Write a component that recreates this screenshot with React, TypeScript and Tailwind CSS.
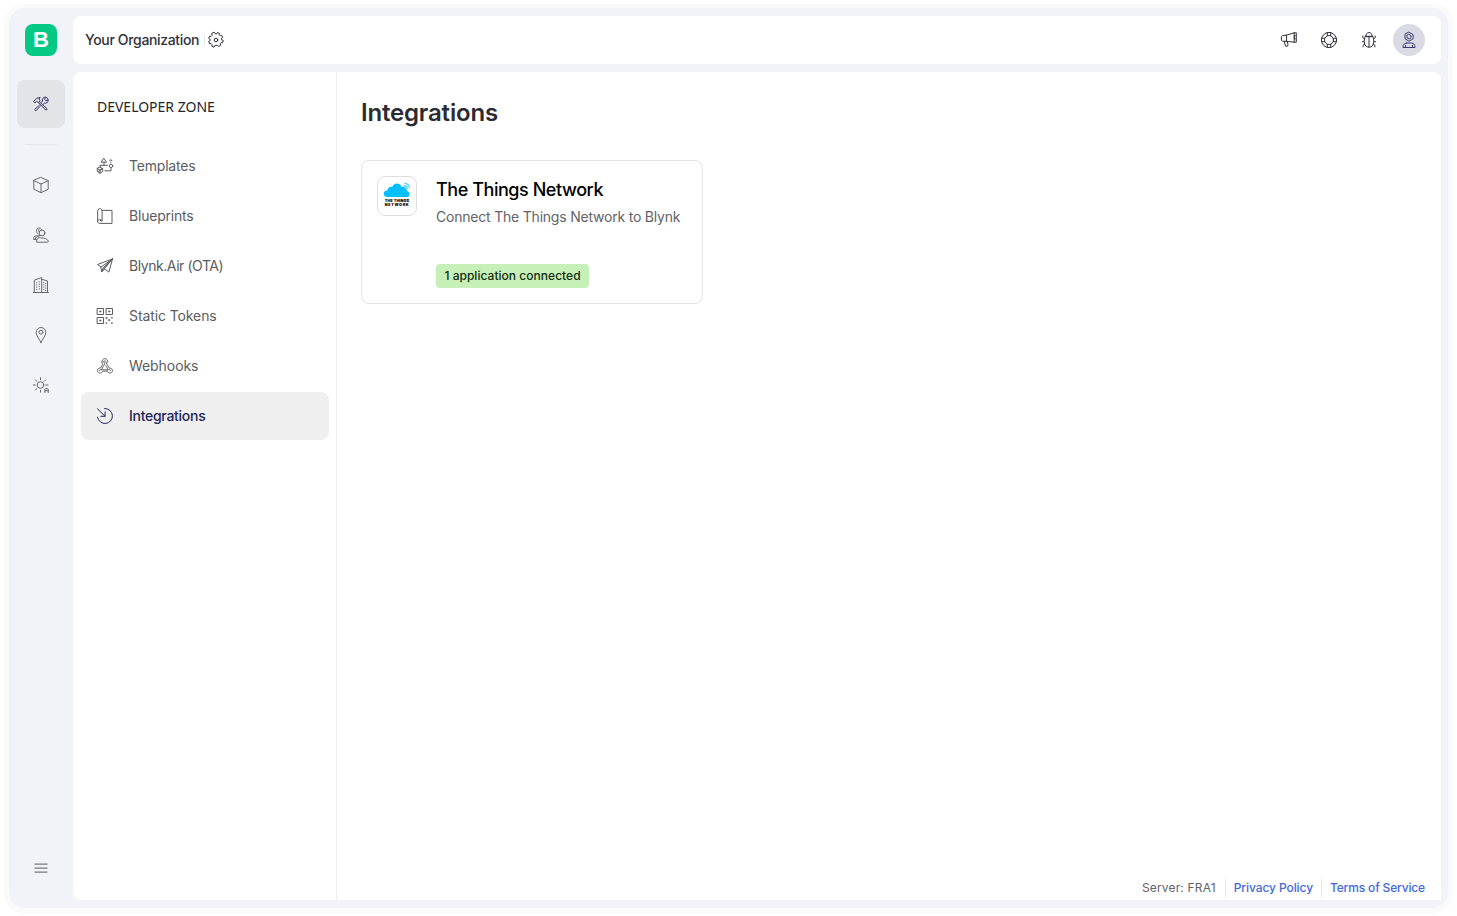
import type { ReactNode } from "react";

type IconProps = { children: ReactNode; className?: string; w?: number };

function Icon({ children, className = "size-4", w = 1 }: IconProps) {
  return (
    <svg viewBox="0 0 16 16" fill="none" stroke="currentColor" strokeWidth={w} strokeLinecap="round" strokeLinejoin="round" className={`shrink-0 overflow-visible ${className}`}>
      {children}
    </svg>
  );
}

const Tools = () => (
  <Icon>
    <path d="M.8 5.2 3.6 2.3 7.2 1.5 6 3l1.1 1.8-1.7 1.8-1.8-1.3-1.4 1.3zM6.6 6l7.7 7-1.3 1.3-7.3-7.4M8.8 6.3 9.5 5C9 2.7 10.5.9 12.8 1.2L11.5 3.3l1.6 1.5 2-1c.3 2.4-1.4 3.9-3.6 3.3l-1.2 1.1M6.4 9.2l-4.8 4.3 1.2 1.2 4.7-4.6" />
    <path d="M12.8 1.2c1.3.2 2.1 1.2 2.3 2.6" />
  </Icon>
);
const Box = () => (
  <Icon>
    <path d="M8 .5 15.2 3.6v8.6L8 15.7.8 12.2V3.6zM.8 3.6 8 7l7.2-3.4M8 7v8.7" />
  </Icon>
);
const Users = () => (
  <Icon>
    <circle cx="9" cy="6" r="2.9" />
    <path d="M3.6 14.8c-.5-3.3 2.3-4.9 4.8-3.7 2.4-.6 6.1.8 6.9 2.9.3.8-.2 1.2-1.2 1.2H4.3zM5 6.8C2.5 5.6 3.2 1.3 5.7 1c1.4-.2 2.5.4 2.9 1.5M6.2 5C5 4.2 5.2 2.7 6.2 2M3.5 12.5H.7C.3 9.5 2.6 8.3 5.2 8.8h1.7M2.2 12c.2-2 1.6-2.7 3.6-2.1" />
  </Icon>
);
const Building = () => (
  <Icon>
    <path d="M.5 15.5h15M1.3 15.4V3.1L8.7.6v14.8M8.7 2.2l5.8 1.8v11.4" />
    <path d="M3.8 5v8.5M6.3 4.3v9.2M10.8 5v9M12.7 6v8" strokeDasharray="1.2 1.1" strokeLinecap="butt" strokeWidth=".9" />
  </Icon>
);
const Pin = () => (
  <Icon>
    <path d="M8 15.6C6.9 12.4 3.2 9.2 3.2 5.3a4.8 4.8 0 0 1 9.6 0c0 3.9-3.7 7.1-4.8 10.3z" />
    <circle cx="8" cy="5.2" r="1.9" />
  </Icon>
);
const Automation = () => (
  <Icon>
    <circle cx="7.5" cy="8" r="3.3" />
    <path d="M7.5.8v2M7.5 13.2v2M.3 8h2M12.7 8h2.2M2.4 2.9l1.4 1.4M12.6 2.9l-1.4 1.4M2.4 13.1l1.4-1.4M11.9 15.5v-3.4l.7-.6h1.9l.7.6v3.4M11.9 13.7h3.3" />
  </Icon>
);
const Menu = () => (
  <Icon className="size-4 text-[#777980]" w={1.2}>
    <path d="M1.5 4.2h13M1.5 8.2h13M1.5 12.2h13" strokeLinecap="butt" />
  </Icon>
);
const Gear = () => (
  <Icon>
    <circle cx="8" cy="8" r="1.8" />
    <path d="M6.6.5 7.2 1.8h1.6L9.4.5l2.3 1-.5 1.3 1 1 1.4-.5 1.1 2.2-1.2.7v1.6l1.7.6-.6 2.4-1.4-.2-1 1.1.5 1.5-2.2 1.3-.9-1.1H6.9L6 15.2l-2.3-1.1.5-1.5-1.1-1.1-1.5.4-.9-2.4 1.4-.8V7.2L.7 6.4l.9-2.3 1.5.4 1.1-1.1-.5-1.5z" />
  </Icon>
);
const Megaphone = () => (
  <Icon>
    <path d="M5.2 3.2 1.6 3.5.4 4.6v3.6l1 1 3.8.1zM5.2 3.2 13.2.8v9.4l-8-.9M13.2.8h2.1v9.4h-2.1M3.2 9.4l1.4 4.8h2l.4-1.8-.8-2.9" />
    <path d="M14.3 3.7h-1v3.2h1" />
  </Icon>
);
const Lifebuoy = () => (
  <Icon>
    <circle cx="8" cy="8" r="7.6" />
    <circle cx="8" cy="8" r="4.5" />
    <path d="M6.3.6v3M9.7.6v3M6.3 12.4v3M9.7 12.4v3M.6 6.3h3M.6 9.7h3M12.4 6.3h3M12.4 9.7h3" />
  </Icon>
);
const Bug = () => (
  <Icon>
    <path d="M5 4.3C4.6 2.5 5.7.6 8 .6s3.4 1.9 3 3.7zM4.3 4.3h7.4M4.2 4.5c-1.5 3-1.4 7.3.6 9.5 1.6 1.6 4.8 1.6 6.4 0 2-2.2 2.1-6.5.6-9.5M8 4.3v10.8M3.4 6.8 1.8 5.7V4M3 9.7H1.3M3.8 12l-1.7 1.2v1.7M12.6 6.8l1.6-1.1V4M13 9.7h1.7M12.2 12l1.7 1.2v1.7" />
  </Icon>
);
const Person = () => (
  <Icon>
    <path d="m8 .3 2.1 1.1 2 1.1v4.3L8 9.2 4 6.8V2.5zM5.6 11h4.8c2.3.2 3.7 1.7 3.6 4.5H2c-.1-2.8 1.3-4.3 3.6-4.5zM4.5 13.3v2.1M11.5 13.3v2.1" />
    <path d="m8 2.5 2 1.1v2.2L8 7 6 5.8V3.6z" />
  </Icon>
);
const Templates = () => (
  <Icon>
    <path d="m7 .5 2.5 3.7h-5zM7 4.2v3.1M3.2 7.3h7.3M3.2 7.3V9M7.8 12.8H14V10M12.7 2.7c0-1.4 2.2-1.3 2.2 0M13.8 4v.5" />
    <circle cx="14" cy="7.9" r="1.7" />
    <path d="m3 9.4 2.7 1.1v3L3 15.2.3 13.5v-3zM.3 10.5 3 12.2l2.7-1.7M3 12.2v3M1.3 13.8l3.4-3" />
  </Icon>
);
const Blueprint = () => (
  <Icon>
    <path d="M.7 13.4V3.2C.7-.3 5.1-.3 5.1 3.2v9.6M5.1 2.4h9.9v13H2.7c-2.8 0-2.8-4.1 0-3.5L3.9 13M5.1 12.8H3.7v-1.5" />
  </Icon>
);
const Plane = () => (
  <Icon>
    <path d="M15.5.9.5 6.5l3.3 2.2zM15.5.9l-3.6 13.2-4.5-3.2zM3.8 8.7l.8 5.2L15.5.9 6 10l-1.4 3.9 2.8-3" />
  </Icon>
);
const Qr = () => (
  <Icon>
    <path d="M.5.5h6v6h-6zM9.5.5h6v6h-6zM.5 9.5h6v6h-6z" />
    <path d="M3 3h1v1H3zM12 3h1v1h-1zM3 12h1v1H3zM9.2 9.5h1v1h-1zM11.8 11.6h1v1h-1zM14.7 9.4h.7v.7h-.7zM9.2 14.8h.6v.6h-.6zM14.7 14.7h.7v.7h-.7z" fill="currentColor" strokeWidth=".7" />
  </Icon>
);
const Webhook = () => (
  <Icon w={0.9}>
    <path d="M4.9 4.2a3 3 0 1 1 5.9 0M4.9 4.2c0 .8.4 1.4 1 1.9L3.6 10C1.8 9.7.4 10.9.4 12.5c0 3.2 4.6 3.4 5.4.6h4.4M9.3 5.1l2.9 5c4.4-.4 4.3 5 .7 5-1.4 0-2.3-.8-2.7-2M6.7 3.6c.2-1.3 2-1.3 2.2 0L9.3 5.1M6.7 3.6l1.1 2.2-3.5 6M2 12.5c.3-1.1 1.6-1.3 2.3-.7h6.8L8.9 7.7M11.1 11.8c.9-.8 2.4-.5 2.6.7" />
  </Icon>
);
const Integration = () => (
  <Icon>
    <path d="M.5.9 8 8.2M8.1 4v4.3H3.8M7.7.5a7.5 7.5 0 1 1-7.2 8.7" />
  </Icon>
);

const railItems = [
  { id: "devices", icon: <Box /> },
  { id: "users", icon: <Users /> },
  { id: "organizations", icon: <Building /> },
  { id: "locations", icon: <Pin /> },
  { id: "automations", icon: <Automation /> },
];

const menuItems = [
  { label: "Templates", icon: <Templates />, track: "tracking-[-0.2px]" },
  { label: "Blueprints", icon: <Blueprint />, track: "tracking-[-0.21px]" },
  { label: "Blynk.Air (OTA)", icon: <Plane />, track: "tracking-[-0.44px]" },
  { label: "Static Tokens", icon: <Qr />, track: "tracking-[-0.1px]" },
  { label: "Webhooks", icon: <Webhook />, track: "tracking-[-0.07px]" },
];

function NetworkLogo() {
  return (
    <div className="flex size-10 shrink-0 flex-col items-center rounded-lg border border-[#dedede] bg-white pt-[5px]">
      <svg viewBox="0 0 28 16" className="h-4 w-7 overflow-visible" fill="none">
        <path d="M4.5 15C-.3 15-.7 8.6 4.3 8.4 5.2 5.1 7.2 4.3 9.4 4.8c1.8-4.6 7.6-4.1 9 0 2.8-.4 5.2.9 5.5 3.9 3.6 1.3 3.4 6.3.2 6.3z" fill="#00bfff" />
        <path d="M20.8 3.6c2 .1 3.3 1.3 3.5 3.3M21.5 1.3c2.8.2 4.7 2.2 4.9 4.9" stroke="#32caff" strokeWidth="1.1" />
      </svg>
      <div className="flex h-[10px] flex-col items-center pt-px text-[3.8px] leading-[4px] font-black text-black">
        <span className="tracking-[0.1px] whitespace-nowrap">THE THINGS</span>
        <span className="tracking-[0.65px] whitespace-nowrap">NETWORK</span>
      </div>
    </div>
  );
}

export default function App() {
  return (
    <div className="h-screen w-full overflow-hidden bg-white px-1 pt-1 pb-[3px] font-['Inter','Liberation_Sans',sans-serif]">
      <div className="h-full rounded-[20px] bg-[#fafafa] px-[5px] pt-1 pb-[5px]">
        <div className="flex h-full rounded-2xl bg-[#f2f3f8] pt-2 pr-[7px] pb-2">
          <nav className="flex w-16 shrink-0 flex-col items-center pt-2 text-[#66676d]">
            <div className="flex size-8 items-center justify-center rounded-lg bg-[#04c985] font-['Liberation_Sans',sans-serif] text-[22px] leading-none font-bold text-white">B</div>
            <div className="mt-6 flex size-12 items-center justify-center rounded-lg bg-[#e3e4e8] text-[#33336c]"><Tools /></div>
            <div className="mt-4 h-px w-8 bg-[#e4e5e9]" />
            <div className="mt-4 flex flex-col gap-0.5">
              {railItems.map((item) => (
                <div key={item.id} className="flex size-12 items-center justify-center">{item.icon}</div>
              ))}
            </div>
            <div className="mt-auto mb-6"><Menu /></div>
          </nav>

          <div className="flex min-w-0 flex-1 flex-col gap-2">
            <header className="flex h-12 shrink-0 items-center rounded-lg bg-white pr-4 pl-3 text-[#30313a]">
              <div className="w-[119px] pb-0.5 text-[14px] font-medium tracking-[-0.34px] whitespace-nowrap">Your Organization</div>
              <div className="mr-[3px] h-3 w-px bg-[#e8e8ea]" />
              <Gear />
              <div className="ml-auto flex items-center gap-6">
                <Megaphone />
                <Lifebuoy />
                <Bug />
                <div className="-ml-2 flex size-8 items-center justify-center rounded-full bg-[#d9dae3] text-[#3b3c74]"><Person /></div>
              </div>
            </header>

            <div className="flex min-h-0 flex-1 rounded-t-lg rounded-bl-lg bg-white">
              <aside className="w-[264px] shrink-0 border-r border-[#efeff2] pt-6 pr-[7px] pl-2">
                <h2 className="h-[46px] pl-4 font-['Noto_Sans',sans-serif] text-[14px] leading-[22px] tracking-[-0.01px] text-[#242529]">DEVELOPER ZONE</h2>
                <div className="flex flex-col gap-0.5">
                  {menuItems.map((item) => (
                    <div key={item.label} className="flex h-12 items-center gap-4 px-4 text-[14px] text-[#5b5c60]">
                      {item.icon}
                      <span className={`pb-0.5 ${item.track}`}>{item.label}</span>
                    </div>
                  ))}
                  <div className="flex h-12 items-center gap-4 rounded-lg bg-[#efeff0] px-4 text-[14px] text-[#24245b]">
                    <Integration />
                    <span className="pb-0.5 font-medium tracking-[-0.28px]">Integrations</span>
                  </div>
                </div>
              </aside>

              <main className="flex min-w-0 flex-1 flex-col px-6 pt-[25px]">
                <h1 className="text-[24px] leading-8 font-semibold tracking-[-0.18px] text-[#2b2b33]">Integrations</h1>
                <section className="mt-[31px] flex h-36 w-[341.5px] rounded-lg border border-[#e3e3e5] p-[15px]">
                  <NetworkLogo />
                  <div className="ml-[19px] flex flex-col items-start whitespace-nowrap">
                    <h3 className="text-[18px] leading-[27px] font-medium tracking-[-0.44px] text-black">The Things Network</h3>
                    <p className="mt-[3px] text-[14px] leading-[22px] tracking-[-0.21px] text-[#626367]">Connect The Things Network to Blynk</p>
                    <div className="mt-auto flex h-6 w-[153px] items-center justify-center rounded bg-[#c7f0b8] text-[12px] font-medium tracking-[0.03px] text-[#132b10]">1 application connected</div>
                  </div>
                </section>
                <footer className="mt-auto -mr-2 mb-1 flex h-4 items-center justify-end text-[12px] whitespace-nowrap text-[#4169e1]">
                  <span className="pr-[9px] tracking-[0.17px] text-[#626367]">Server: FRA1</span>
                  <span className="border-l border-[#e7e7ea] px-2 font-medium tracking-[-0.09px]">Privacy Policy</span>
                  <span className="border-l border-[#e7e7ea] pl-2 font-medium tracking-[-0.16px]">Terms of Service</span>
                </footer>
              </main>
            </div>
          </div>
        </div>
      </div>
    </div>
  );
}
